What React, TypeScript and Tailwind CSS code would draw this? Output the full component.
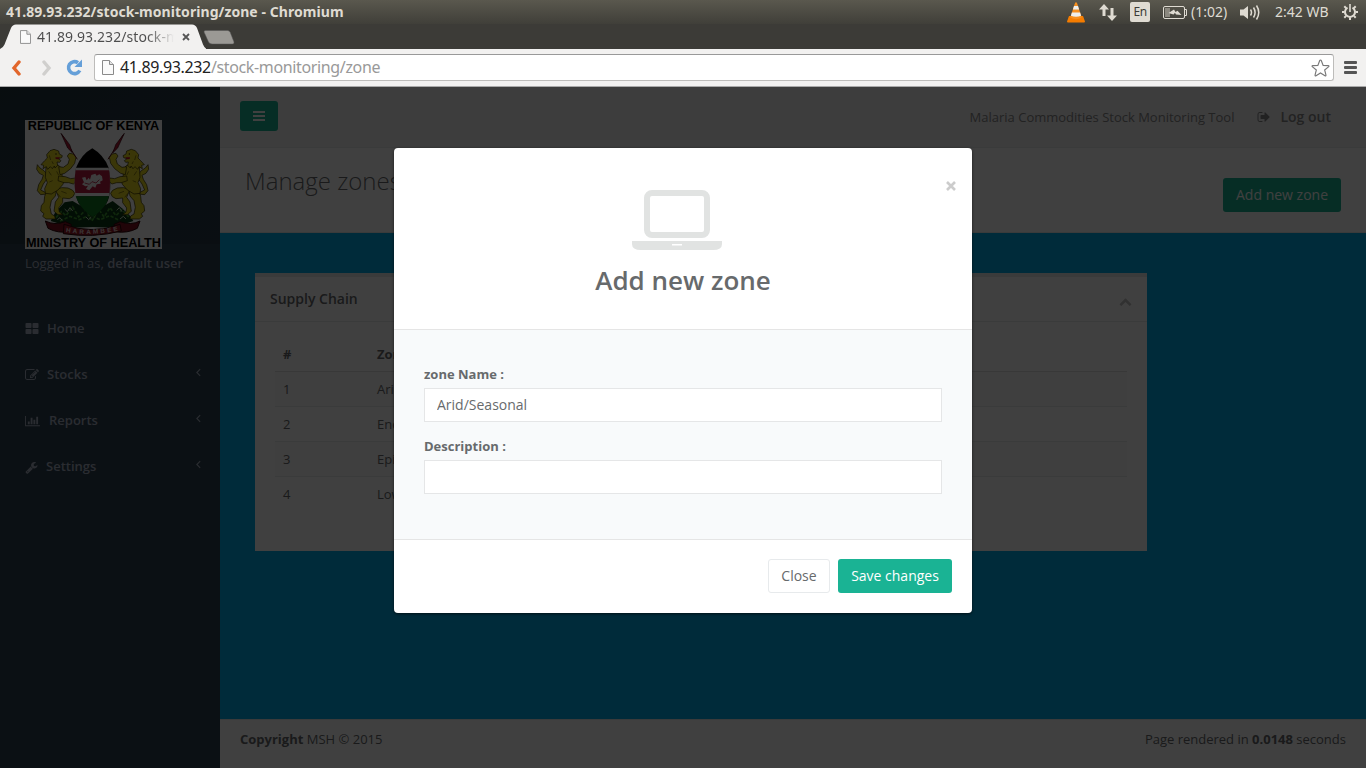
import React from "react";

type GlyphProps = { d: string; className?: string; box?: string };

function Glyph({ d, className = "", box = "0 0 1792 1792" }: GlyphProps) {
  return (
    <svg viewBox={box} className={className} fill="currentColor" aria-hidden="true">
      <path d={d} />
    </svg>
  );
}

const ICON = {
  grid: "M832 1024v384q0 52-38 90t-90 38h-512q-52 0-90-38t-38-90v-384q0-52 38-90t90-38h512q52 0 90 38t38 90zm0-768v384q0 52-38 90t-90 38h-512q-52 0-90-38t-38-90v-384q0-52 38-90t90-38h512q52 0 90 38t38 90zm896 768v384q0 52-38 90t-90 38h-512q-52 0-90-38t-38-90v-384q0-52 38-90t90-38h512q52 0 90 38t38 90zm0-768v384q0 52-38 90t-90 38h-512q-52 0-90-38t-38-90v-384q0-52 38-90t90-38h512q52 0 90 38t38 90z",
  edit: "M888 1184l116-116-152-152-116 116v56h96v96h56zm440-720q-16-16-33 1l-350 350q-17 17-1 33t33-1l350-350q17-17 1-33zm80 594v190q0 119-84.5 203.5t-203.5 84.5h-832q-119 0-203.5-84.5t-84.5-203.5v-832q0-119 84.5-203.5t203.5-84.5h832q63 0 117 25 15 7 18 23 3 17-9 29l-49 49q-14 14-32 8-23-6-45-6h-832q-66 0-113 47t-47 113v832q0 66 47 113t113 47h832q66 0 113-47t47-113v-126q0-13 9-22l64-64q15-15 35-7t20 29zm-96-738l288 288-672 672h-288v-288zm444 132l-92 92-288-288 92-92q28-28 68-28t68 28l152 152q28 28 28 68t-28 68z",
  chart: "M0 128h128v1280h1920v128h-2048zM384 896h256v384h-256zM768 384h256v896h-256zM1152 640h256v640h-256zM1536 256h256v1024h-256z",
  wrench: "M448 1472q0-26-19-45t-45-19-45 19-19 45 19 45 45 19 45-19 19-45zm644-420l-682 682q-37 37-90 37-52 0-91-37l-106-108q-38-36-38-90 0-53 38-91l681-681q39 98 114.500 173.500t173.500 114.500zm634-435q0 39-23 106-47 134-164.500 217.500t-258.500 83.500q-185 0-316.500-131.500t-131.500-316.500 131.500-316.500 316.500-131.500q58 0 121.500 16.500t107.500 46.500q16 11 16 28t-16 28l-293 169v224l193 107q5-3 79-48.500t135.500-81 70.500-35.500q15 0 23.500 10t8.500 25z",
  signOut: "M704 1440q0 4 1 20t.5 26.500-3 23.500-10 19.500-20.500 6.500h-320q-119 0-203.500-84.500t-84.500-203.500v-704q0-119 84.500-203.500t203.500-84.500h320q13 0 22.500 9.500t9.500 22.500q0 4 1 20t.5 26.500-3 23.500-10 19.500-20.500 6.500h-320q-66 0-113 47t-47 113v704q0 66 47 113t113 47h312l11.500 1 11.500 3 8 5.500 7 9 2 13.500zm928-544q0 26-19 45l-544 544q-19 19-45 19t-45-19-19-45v-288h-448q-26 0-45-19t-19-45v-384q0-26 19-45t45-19h448v-288q0-26 19-45t45-19 45 19l544 544q19 19 19 45z",
  chevronUp: "M1683 1331l-166 165q-19 19-45 19t-45-19l-531-531-531 531q-19 19-45 19t-45-19l-166-165q-19-19-19-45.500t19-45.500l742-741q19-19 45-19t45 19l742 741q19 19 19 45.500t-19 45.500z",
};

function PageIcon({ className }: { className: string }) {
  return (
    <svg viewBox="0 0 12 15" className={className}>
      <path d="M.5.5h7l4 4v10H.5z" fill="#fafafa" stroke="#8a8a8a" />
      <path d="M7.500.5v4h4" fill="#e4e4e4" stroke="#8a8a8a" />
    </svg>
  );
}

function TitleBar() {
  return (
    <div className="flex h-6 items-center justify-between bg-linear-to-b from-[#5a584e] to-[#403f39] text-[#dfdbd2]">
      <div className="pl-1.5 text-[14px] leading-6 font-bold tracking-[0.06px]">
        41.89.93.232/stock-monitoring/zone - Chromium
      </div>
      <div className="flex items-center pr-2 text-[14px]">
        <svg viewBox="0 0 18 21" className="mr-[14px] h-[21px] w-[18px]">
          <path d="M2 14h14l2 5.500q0 1-1 1H1q-1 0-1-1z" fill="#f57c00" />
          <path d="M8 1q1-1.500 2 0l4.800 14.500q-5.800 3.500-11.600 0z" fill="#f78f1e" />
          <path d="M7 4h4l1.100 3.500H5.900zM4.900 10.500h8.200l1 3.200q-5 2.200-10.200 0z" fill="#eeeeec" />
        </svg>
        <svg viewBox="0 0 18 17" className="mr-[13px] h-[17px] w-[18px]" fill="#dfdbd2">
          <path d="M5 0l5 5.500H6.500V12h-3V5.500H0zM13 17l-5-5.500h3.500V4h3v7.500H18z" />
        </svg>
        <div className="mr-[13px] flex h-5 w-5 items-center justify-center rounded-[2px] bg-[#dfdbd2] text-[12px] tracking-[-0.5px] text-[#3c3b37]">
          En
        </div>
        <svg viewBox="0 0 24 13" className="mr-1 h-[13px] w-6">
          <rect x=".5" y=".5" width="21" height="12" rx="1.500" fill="none" stroke="#dfdbd2" />
          <path d="M22 3.500h1.500v6H22" fill="none" stroke="#dfdbd2" />
          <rect x="2" y="2" width="5" height="9" fill="#8b887f" />
          <path d="M5.500 7l5.500-3.500 1.500 2.500 2-1.200L18.500 9l-5.500-.5-1-1.800-1.500 1.800z" fill="#dfdbd2" />
        </svg>
        <span className="mr-[12px] mb-[2px] w-[37px]">(1:02)</span>
        <svg viewBox="0 0 20 17" className="mr-[15px] h-[17px] w-5" fill="none" stroke="#dfdbd2" strokeWidth="1.500">
          <path d="M0 5.500h3.500L8 2v13l-4.500-3.500H0z" fill="#dfdbd2" stroke="none" />
          <path d="M10.500 5.500q2 3 0 6M13.500 3.500q3.200 5 0 10M16.500 1.500q4.500 7 0 14" />
        </svg>
        <span className="mr-[11px] mb-[2px] w-[56px] whitespace-nowrap">2:42 WB</span>
        <svg viewBox="0 0 16 16" className="h-4 w-4" fill="none" stroke="#dfdbd2">
          <path d="M5.500 3.600a5 5 0 1 0 5 0" strokeWidth="2" />
          <path d="M8 0v8" strokeWidth="1.600" />
          <path d="M0 8h2.500M13.500 8H16M8 13.500V16M2.300 2.300l1.800 1.800M13.700 2.300l-1.800 1.800M2.300 13.700l1.800-1.800M13.700 13.700l-1.800-1.800" strokeWidth="2" />
        </svg>
      </div>
    </div>
  );
}

function TabStrip() {
  return (
    <div className="flex h-[25px] bg-[#3c3b37]">
      <div className="relative h-[25px] w-[206px]">
        <svg viewBox="0 0 206 25" className="absolute inset-0 h-[25px] w-[206px]">
          <path d="M0 25q3-1 4.500-4.500L11 4q1.500-3.500 5-3.500h176q3.500 0 5 3.500l6 16.500q1.500 3.500 4 4.500z" fill="#f2f1f0" />
        </svg>
        <div className="relative flex h-[25px] items-center pl-5">
          <PageIcon className="h-[14px] w-[11px]" />
          <div className="ml-[6px] w-[137px] overflow-hidden bg-linear-to-r from-[#4c4c4c] from-80% to-[#f2f1f0] bg-clip-text text-[14px] tracking-[0.08px] whitespace-nowrap text-transparent">
            41.89.93.232/stock-m
          </div>
          <svg viewBox="0 0 8 8" className="ml-2 h-2 w-2 stroke-[#555] stroke-[1.800]">
            <path d="M1 1l6 6M7 1L1 7" />
          </svg>
        </div>
      </div>
      <svg viewBox="0 0 32 15" className="-ml-[3px] mt-[6px] h-[15px] w-8">
        <path d="M1 2q-.5-1.500 1.500-1.500h22q2 0 2.800 2L31 12q.5 2-1.500 2H9q-2.500 0-3.500-2z" fill="#9b9995" stroke="#555" strokeWidth=".5" />
      </svg>
    </div>
  );
}

function Toolbar() {
  return (
    <div className="flex h-[38px] items-center border-b border-[#a9a9a9] bg-[#f2f1f0] pl-[11px]">
      <svg viewBox="0 0 10 16" className="h-4 w-[10px] fill-none stroke-[#e2662b] stroke-[3.400]">
        <path d="M8 2L3 8l5 6" strokeLinecap="round" />
      </svg>
      <svg viewBox="0 0 10 16" className="ml-[21px] h-4 w-[10px] fill-none stroke-[#d0cfcd] stroke-[3.400]">
        <path d="M2 2l5 6-5 6" strokeLinecap="round" />
      </svg>
      <svg viewBox="0 0 17 17" className="ml-[14px] h-[17px] w-[17px]">
        <path d="M13.800 11.500A6 6 0 1 1 12 3.700" fill="none" stroke="#659fd8" strokeWidth="3.600" />
        <path d="M16 .5v7.500H8.500z" fill="#659fd8" />
      </svg>
      <div className="ml-[11px] flex h-[27px] w-[1240px] items-center rounded-[3px] border border-[#bdbcba] border-t-[#999] bg-white pl-[7px]">
        <PageIcon className="h-[15px] w-3" />
        <div className="mb-[2px] ml-[6px] flex-1 text-[16px] leading-6 tracking-[-0.36px] whitespace-nowrap text-[#999]">
          <span className="text-[#222]">41.89.93.232</span>/stock-monitoring/zone
        </div>
        <svg viewBox="0 0 20 19" className="mr-[3px] h-[18px] w-[19px] fill-white stroke-[#777] stroke-[1.200]">
          <path d="M10 1q.6 0 .9.800l1.900 4.900 5.300.3q1.500.2.300 1.300l-4 3.300 1.300 5.200q.3 1.500-1 .800L10 14.700l-4.700 2.900q-1.300.7-1-.8l1.300-5.200-4-3.300Q.4 7.200 1.900 7l5.300-.3 1.900-4.900Q9.400 1 10 1z" />
        </svg>
      </div>
      <div className="ml-[10px] flex w-[13px] flex-col gap-[2px]">
        <div className="h-[3px] rounded-[1px] bg-[#555]" />
        <div className="h-[3px] rounded-[1px] bg-[#555]" />
        <div className="h-[3px] rounded-[1px] bg-[#555]" />
      </div>
    </div>
  );
}

const LION = (
  <g transform="translate(30 51)">
    <g fill="#e8d820" stroke="#2c2600" strokeWidth="2" strokeLinejoin="round">
      <path d="M22 98l8 10 12 8 10 12-2 14-10 14-8 18 12 6 8-4-2 10-18 2-10-12 4-18 10-16 4-12-12-6-8-12z" />
      <path d="M54 162l26 10-4 20-12 14-4 20 4 20 10 6 2 9H48l-10-8 4-8-10-8 2-16 8-10 2-18z" />
      <path d="M76 172q20-8 38-4 18 6 20 16-2 12-16 16l-20-2 0 14-12 16 2 12 10 8H84l-12-10 4-28 10-14z" />
      <path d="M48 104q20-8 38-4l12 12-2 18 10 12-8 16-14 16-20 12-18-2-2-14 8-18-6-16z" />
      <path d="M86 104l14 2 14-10 4-14-6-10 6-8 12 2 8 10-4 18-12 16-18 14-14 4z" />
      <path d="M86 132l20 2 16 6 14-2 4 10-10 8-14-4-14 0-18-6z" />
      <path d="M44 86l8-8-2-10 10-12 12-4 14 5 2 9 9 5-2 6-10 3 8 6-4 5-8-1 2 10-8 8-2-6-6 8-6-6-8 8-4-8-10 6 2-10-8-2z" />
    </g>
    <path d="M76 76l14 0-4 6-9-1z" fill="#b81028" />
    <circle cx="78" cy="66" r="2" fill="#201800" />
    <path d="M58 70l4 14M66 88l4 8M56 118l8 12M80 118l6 12M58 150l10-4M94 178l16 6M82 184l10 12" stroke="#5c5008" strokeWidth="2" fill="none" />
    <path d="M96 8l28 46 18 28" fill="none" stroke="#601018" strokeWidth="3" />
    <path d="M93 4l26 34 8 24-14-14z" fill="#b01834" stroke="#300810" strokeWidth="2" />
  </g>
);

function Emblem() {
  return (
    <div className="relative h-[129px] w-[137px] overflow-hidden bg-white font-[Liberation_Sans,sans-serif]">
      <svg viewBox="15 15 411 387" className="absolute inset-0 h-[129px] w-[137px]" preserveAspectRatio="none">
        <path d="M92 318l14-26 28-30 24-4 24 14 36-12 34 12 26-14 28 22 24 22 10 16-60 20-62-2-60 2z" fill="#0b3a14" />
        <path d="M108 308l16-18 14 12 20-26 18 30 22-22 18 34 20-36 16 24 18-28 18 24 18-18 20 22M120 318l30-14 28 10 32-14 30 14 30-12 28 14" stroke="#3f9a32" strokeWidth="5" fill="none" strokeDasharray="10 5" />
        <path d="M134 282l8 8 8-12 8 10M290 286l8-8 8 12M112 314l8-6 6 8M300 312l10-8 8 8M198 306l8 8 8-8" stroke="#c8d8c0" strokeWidth="3" fill="none" />
        {LION}
        <g transform="translate(436 0) scale(-1 1)">{LION}</g>
        <path d="M168 158q16-40 49-58 34 20 49 58 12 74-6 106-16 26-42 42-28-18-42-42-18-36-8-106z" fill="#000" />
        <path d="M168 158h98q4 22 4 42t-2 44h-102q-2-24-2-44t4-42z" fill="#fff" />
        <path d="M167 166h100q3 16 3 34t-2 34h-102q-2-16-2-34t3-34z" fill="#b81e40" />
        <path d="M167 244h100l-7 20q-16 26-42 42-28-18-42-42z" fill="#107a20" />
        <path d="M186 188l10-2 4 10 6-8 4 6 4-14 12-4 4 6 8-4 8 6 2 12-8 4 2 6-12 2-4 10-8-4-10 12-10-4 6-10-8 2-10-6 6-6z" fill="#f4f4f4" />
        <path d="M194 204l14 4 8-8 12 4 10-10" fill="none" stroke="#b81e40" strokeWidth="2.500" />
        <path d="M76 318q28 14 60 2l18 8-4 22q-36 6-66-10zM360 318q-28 14-60 2l-18 8 4 22q36 6 66-10z" fill="#801020" stroke="#2a0408" strokeWidth="3" />
        <path d="M132 328q84 32 168 0l4 20q-84 22-174 8z" fill="#981826" stroke="#2a0408" strokeWidth="3" />
        <path id="motto" d="M137 351q80 14 164-6" fill="none" />
        <text fontSize="19" fontWeight="700" fill="#e8d8d8">
          <textPath href="#motto" textLength="158">HARAMBEE</textPath>
        </text>
      </svg>
      <div className="relative flex h-full flex-col items-center justify-between text-[12.700px] leading-[12px] font-bold whitespace-nowrap text-black">
        <span className="tracking-[-0.08px]">REPUBLIC OF KENYA</span>
        <span>MINISTRY OF HEALTH</span>
      </div>
    </div>
  );
}

function NavItem({ icon, iconClass, box, label, arrow }: { icon: string; iconClass: string; box?: string; label: string; arrow?: boolean }) {
  return (
    <li className="flex h-[46px] items-center pr-[19px] pl-[25px] text-[13px] font-semibold">
      <Glyph d={icon} box={box} className={iconClass} />
      <span>{label}</span>
      {arrow && (
        <svg viewBox="0 0 6 10" className="mb-[6px] ml-auto h-[9px] w-[5px] fill-none stroke-current stroke-[1.300]">
          <path d="M5 1L1 5l4 4" />
        </svg>
      )}
    </li>
  );
}

function Sidebar() {
  return (
    <aside className="w-[220px] shrink-0 bg-[#2f4050] text-[#a7b1c2]">
      <div className="h-[157px] bg-linear-to-br from-[#22353f] via-[#253845] to-[#283a48] pt-[33px] pl-[25px]">
        <Emblem />
        <div className="mt-[5px] text-[13px] leading-[18px] text-[#a7b1c2]">
          Logged in as, <span className="font-semibold">default user</span>
        </div>
      </div>
      <ul className="mt-[62px]">
        <NavItem icon={ICON.grid} iconClass="mr-[8px] h-[14px] w-[14px]" label="Home" />
        <NavItem icon={ICON.edit} iconClass="mr-[8px] h-[14px] w-[14px]" label="Stocks" arrow />
        <NavItem icon={ICON.chart} box="0 0 2048 1792" iconClass="mr-[9px] h-[13px] w-[15px]" label="Reports" arrow />
        <NavItem icon={ICON.wrench} iconClass="mr-[8px] h-[13px] w-[13px]" label="Settings" arrow />
      </ul>
    </aside>
  );
}

const ZONES = ["Arid/Seasonal", "Endemic", "Epidemic Prone", "Low Risk"];

function Main() {
  return (
    <main className="flex min-w-0 flex-1 flex-col bg-[#00ace8] text-[#676a6c]">
      <header className="flex h-[61px] shrink-0 items-center justify-between border-b border-[#e7eaec] bg-[#f3f3f4] pr-[35px] pl-5">
        <div className="mb-[3px] flex h-[30px] w-[38px] flex-col items-center justify-center gap-[2px] rounded-[3px] bg-[#1ab394]">
          <div className="h-[2px] w-3 bg-white" />
          <div className="h-[2px] w-3 bg-white" />
          <div className="h-[2px] w-3 bg-white" />
        </div>
        <div className="flex items-center text-[13px] text-[#888]">
          <span className="pt-[2px]">Malaria Commodities Stock Monitoring Tool</span>
          <Glyph d={ICON.signOut} className="ml-[23px] h-[14px] w-[14px] text-[#888]" />
          <span className="mb-[2px] ml-[9px] text-[14px] font-semibold">Log out</span>
        </div>
      </header>
      <section className="flex h-[85px] shrink-0 justify-between border-b border-[#e7eaec] bg-white pr-[25px] pl-[25px]">
        <h2 className="mt-[15px] text-[24px] leading-9 font-light">Manage zones</h2>
        <div className="mt-[30px] flex h-[34px] items-center rounded-[3px] bg-[#1ab394] px-[13px] pb-[2px] text-[14px] text-white">Add new zone</div>
      </section>
      <section className="flex-1 pt-10 pl-[35px]">
        <div className="h-[278px] w-[892px] bg-white">
          <div className="flex h-[49px] items-center justify-between border-t-4 border-b border-[#e7eaec] pr-[15px] pl-[15px]">
            <h5 className="mb-px text-[14px] font-semibold">Supply Chain</h5>
            <Glyph d={ICON.chevronUp} className="mt-[4px] h-[13px] w-[13px] text-[#c4c4c4]" />
          </div>
          <div className="px-5 pt-[15px] text-[13px]">
            <div className="flex h-[35px] items-center border-b border-[#ddd] pt-[2px] pl-2 font-bold">
              <span className="w-[94px]">#</span>
              <span>Zone Name</span>
            </div>
            {ZONES.map((zone, i) => (
              <div key={zone} className="flex h-[35px] items-center border-b border-[#e7eaec] pt-[2px] pl-2 odd:bg-white even:bg-[#f9f9f9] last:border-0 last:pt-0">
                <span className="w-[94px]">{i + 1}</span>
                <span>{zone}</span>
              </div>
            ))}
          </div>
        </div>
      </section>
      <footer className="flex h-[49px] shrink-0 justify-between border-t border-[#e7eaec] bg-white px-5 pt-[9px] text-[13px] leading-5">
        <span><b>Copyright</b> MSH © 2015</span>
        <span>Page rendered in <b>0.0148</b> seconds</span>
      </footer>
    </main>
  );
}

function Field({ label, value }: { label: string; value: string }) {
  return (
    <label className="block">
      <span className="mb-[5px] block text-[13px] leading-[18px] font-bold">{label}</span>
      <input readOnly value={value} className="block h-[34px] w-full border border-[#e5e6e7] bg-white px-3 pb-[2px] text-[14px] text-[#676a6c] outline-none" />
    </label>
  );
}

function Modal() {
  return (
    <div className="absolute top-[61px] left-[394px] flex h-[465px] w-[578px] flex-col overflow-hidden rounded-[4px] bg-white text-[#676a6c] shadow-[0_1px_3px_rgba(0,0,0,0.6)]">
      <div className="relative flex h-[182px] flex-col items-center border-b border-[#e5e5e5]">
        <svg viewBox="0 0 90 60" className="mt-[42px] mr-3 h-[60px] w-[90px] shrink-0 text-[#e1e3e2]">
          <rect x="15" y="3" width="60" height="42" rx="5" fill="none" stroke="currentColor" strokeWidth="6" />
          <path d="M0 51h90v3q0 6-9 6H9q-9 0-9-6z" fill="currentColor" />
          <rect x="40" y="54" width="10" height="1.500" fill="#fff" />
        </svg>
        <h4 className="mt-[12px] text-[26px] leading-9 font-semibold">Add new zone</h4>
        <svg viewBox="0 0 10 10" className="absolute top-[33px] right-[16px] h-[10px] w-[10px] stroke-[#ccc] stroke-[2.600]">
          <path d="M1 1l8 8M9 1L1 9" />
        </svg>
      </div>
      <div className="flex h-[209px] flex-col gap-[15px] bg-[#f8fafb] px-[30px] pt-[35px]">
        <Field label="zone Name :" value="Arid/Seasonal" />
        <Field label="Description :" value="" />
      </div>
      <div className="flex flex-1 justify-end gap-2 border-t border-[#e5e5e5] pt-[19px] pr-5 text-[14px]">
        <button className="h-[34px] w-[62px] rounded-[3px] border border-[#e7eaec] bg-white pb-[2px]">Close</button>
        <button className="h-[34px] w-[114px] rounded-[3px] bg-[#1ab394] pb-[2px] whitespace-nowrap text-white">Save changes</button>
      </div>
    </div>
  );
}

export default function App() {
  return (
    <div className="flex h-[768px] w-[1366px] flex-col overflow-hidden font-[Open_Sans,sans-serif]">
      <div className="font-[Noto_Sans,Open_Sans,sans-serif]">
        <TitleBar />
        <TabStrip />
        <Toolbar />
      </div>
      <div className="relative flex min-h-0 flex-1">
        <Sidebar />
        <Main />
        <div className="absolute inset-0 bg-black/75" />
        <Modal />
      </div>
    </div>
  );
}
